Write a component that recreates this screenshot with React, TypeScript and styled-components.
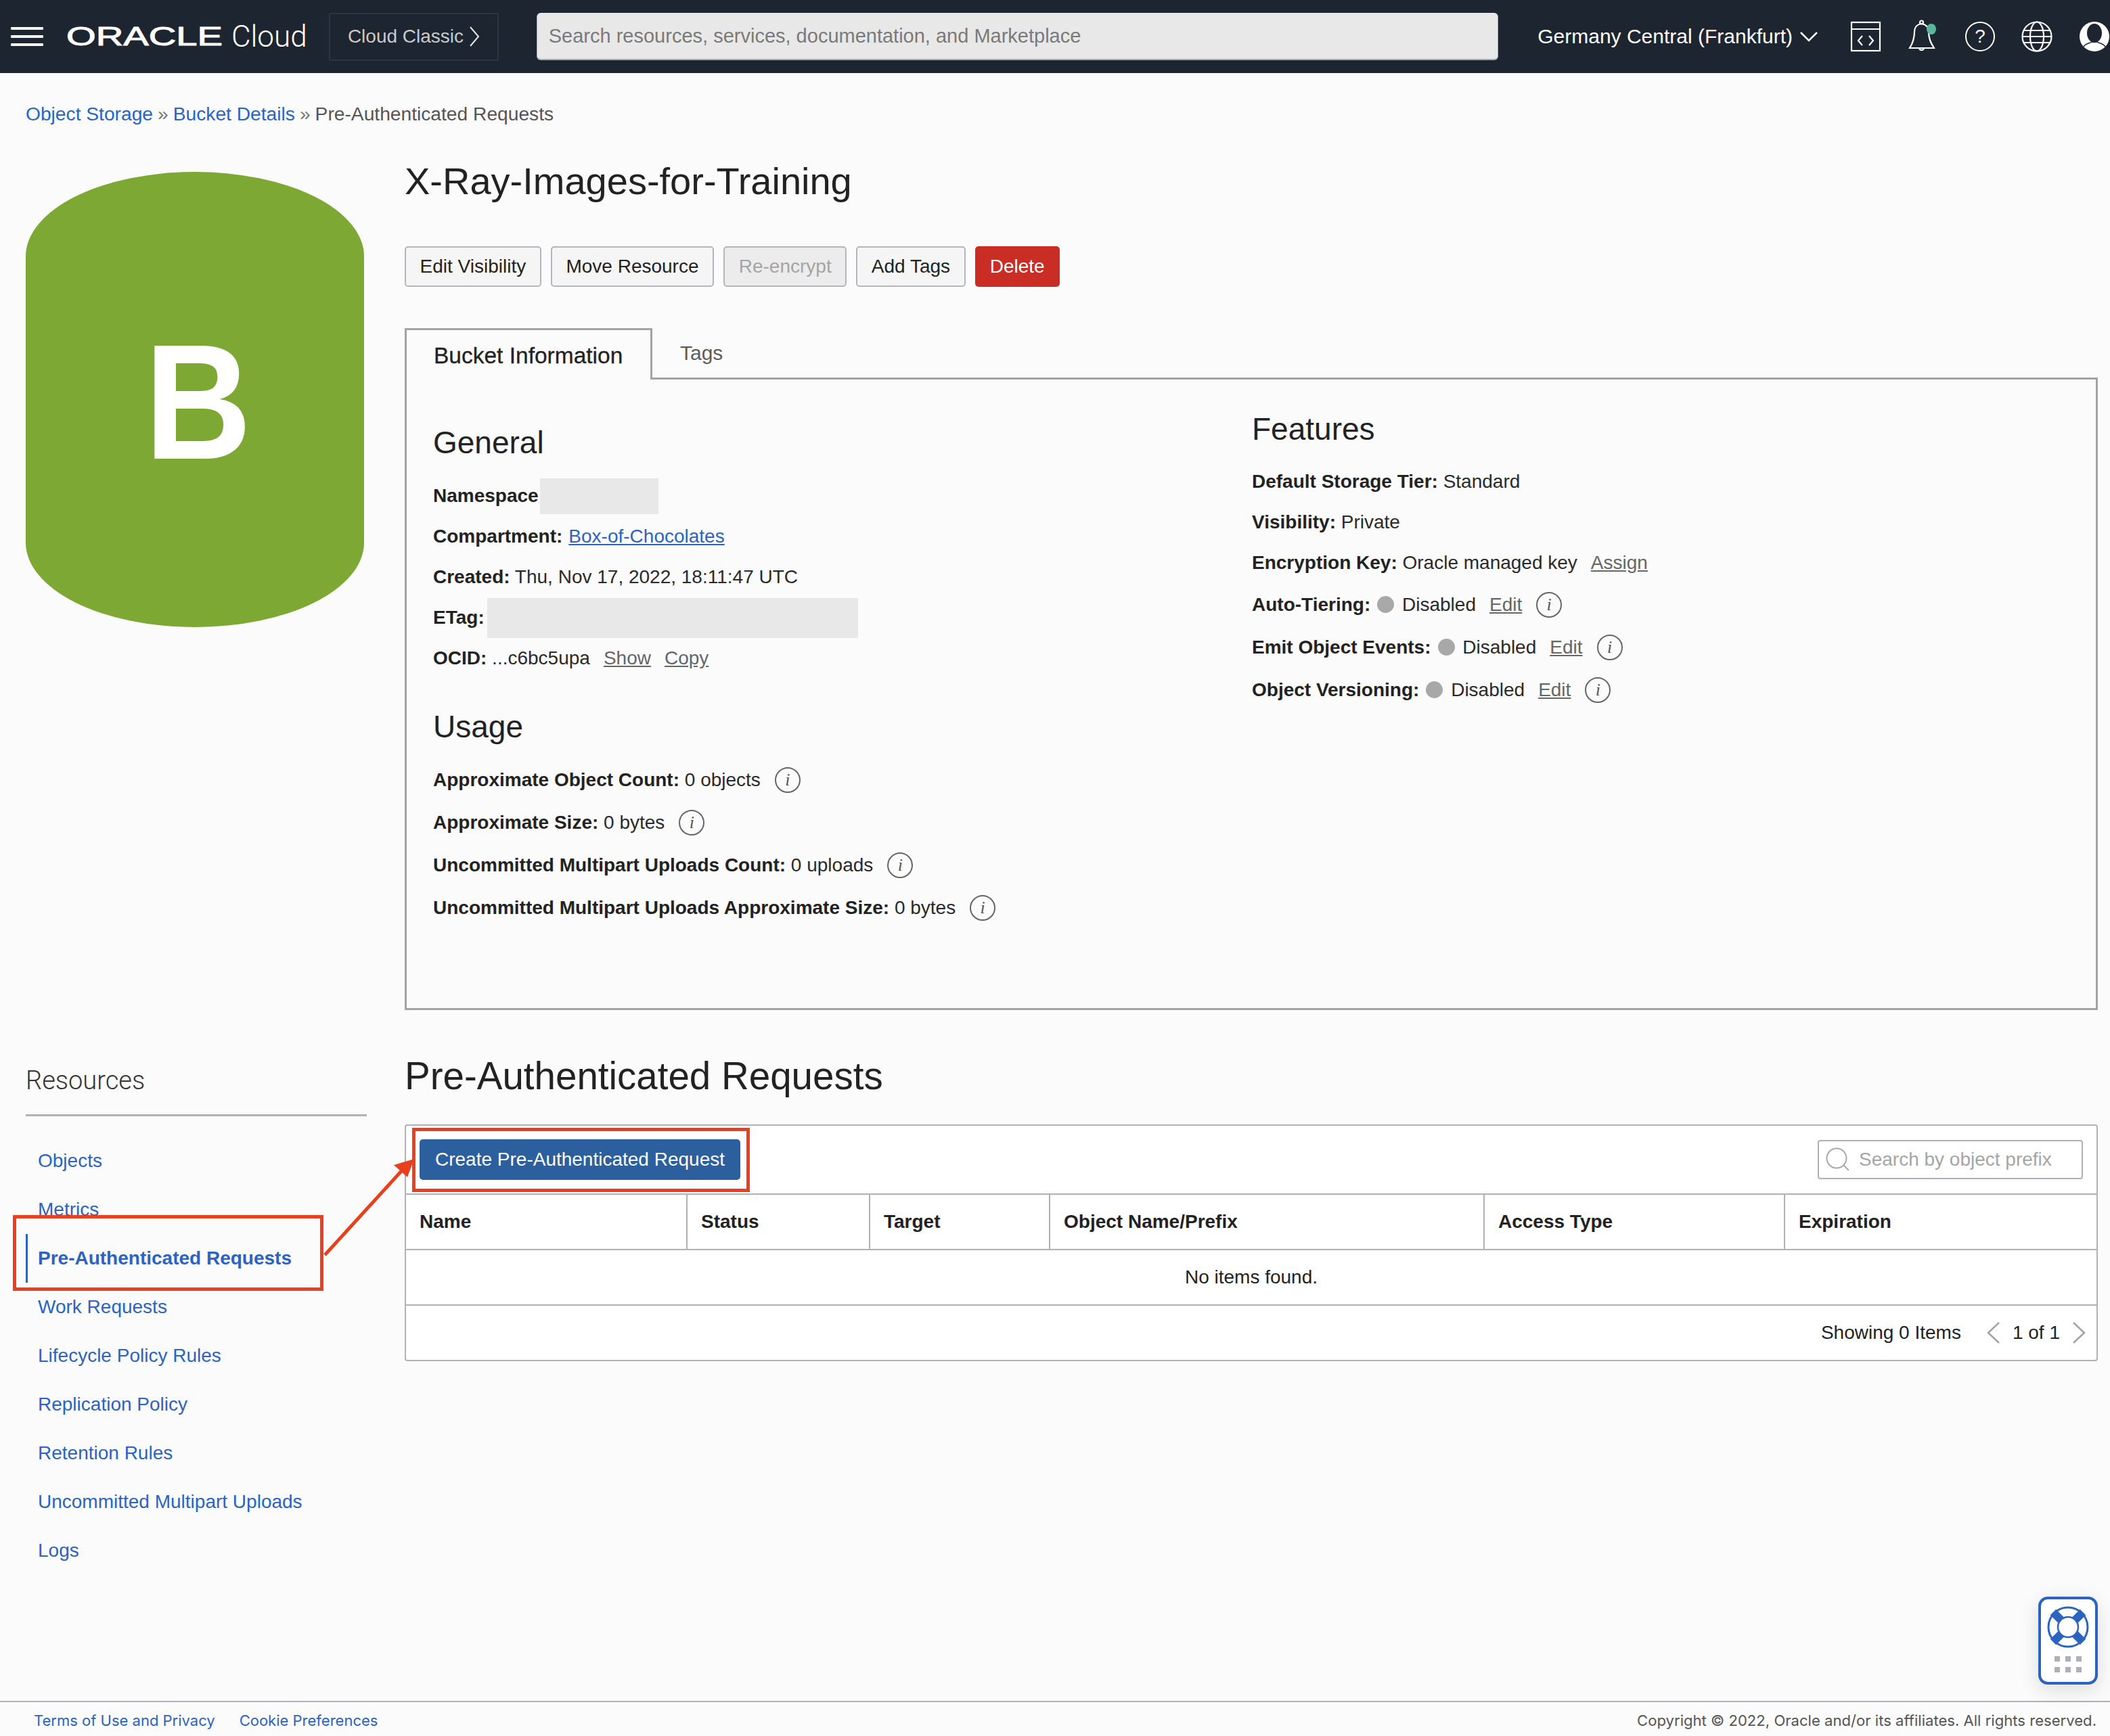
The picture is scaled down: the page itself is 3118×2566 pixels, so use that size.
import styled, { createGlobalStyle } from 'styled-components';

const GlobalStyle = createGlobalStyle`
  html, body { margin: 0; padding: 0; background: #fbfbfb; }
  body { font-family: "Liberation Sans", Arial, sans-serif; font-size: 28px; color: #222; }
  * { box-sizing: border-box; }
`;

const resources = ['Objects', 'Metrics', 'Pre-Authenticated Requests', 'Work Requests', 'Lifecycle Policy Rules', 'Replication Policy', 'Retention Rules', 'Uncommitted Multipart Uploads', 'Logs'];
const columns = ['Name', 'Status', 'Target', 'Object Name/Prefix', 'Access Type', 'Expiration'];

function Chevron({ dir, color, w = 20, h = 34, sw = 2.5 }: { dir: 'left' | 'right' | 'down'; color: string; w?: number; h?: number; sw?: number }) {
  const pts = dir === 'left' ? `${w - 2},2 2,${h / 2} ${w - 2},${h - 2}` : dir === 'right' ? `2,2 ${w - 2},${h / 2} 2,${h - 2}` : `2,2 ${w / 2},${h - 2} ${w - 2},2`;
  return (
    <svg width={w} height={h} viewBox={`0 0 ${w} ${h}`} fill="none" stroke={color} strokeWidth={sw}>
      <polyline points={pts} />
    </svg>
  );
}

function Info() {
  return <InfoIcon>i</InfoIcon>;
}

function App() {
  return (
    <Page>
      <GlobalStyle />
      <Header>
        <Hamburger><span /><span /><span /></Hamburger>
        <Logo><LogoMark>ORACLE</LogoMark><LogoCloud>Cloud</LogoCloud></Logo>
        <ClassicButton>Cloud Classic <Chevron dir="right" color="#e6e6e6" w={16} h={32} sw={2} /></ClassicButton>
        <SearchBar>Search resources, services, documentation, and Marketplace</SearchBar>
        <Region>Germany Central (Frankfurt) <Chevron dir="down" color="#fff" w={28} h={16} sw={2.5} /></Region>
        <HeaderIcons>
          <svg width="46" height="46" viewBox="0 0 46 46" fill="none" stroke="#fff" strokeWidth="2.2">
            <rect x="2" y="2" width="42" height="42" />
            <line x1="2" y1="12" x2="44" y2="12" />
            <polyline points="18,22 12,29 18,36" />
            <polyline points="28,22 34,29 28,36" />
          </svg>
          <svg width="46" height="50" viewBox="0 0 46 50" fill="none" stroke="#fff" strokeWidth="2.2">
            <path d="M3 42 C8 34 10 28 10 18 C10 10 15 7 20 6 C26 7 31 10 31 18 C31 28 34 34 39 42 Z" />
            <path d="M17 43 a4 4 0 0 0 7 0" />
            <circle cx="20.5" cy="4" r="2.5" />
            <ellipse cx="35" cy="14" rx="7" ry="8" fill="#5bb59b" stroke="none" />
          </svg>
          <HelpCircle>?</HelpCircle>
          <svg width="46" height="46" viewBox="0 0 46 46" fill="none" stroke="#fff" strokeWidth="2.2">
            <circle cx="23" cy="23" r="21.5" />
            <ellipse cx="23" cy="23" rx="10" ry="21.5" />
            <line x1="4" y1="14" x2="42" y2="14" />
            <line x1="2" y1="23" x2="44" y2="23" />
            <line x1="4" y1="32" x2="42" y2="32" />
          </svg>
          <svg width="46" height="46" viewBox="0 0 46 46">
            <circle cx="23" cy="23" r="22" fill="#fff" />
            <ellipse cx="23" cy="18" rx="11" ry="14" fill="#1d2531" />
            <path d="M7 38 C11 32 17 33 19 31 L27 31 C29 33 35 32 39 38" fill="none" stroke="#1d2531" strokeWidth="1.5" />
          </svg>
        </HeaderIcons>
      </Header>

      <Content>
        <Breadcrumb>
          <Link>Object Storage</Link><Sep>»</Sep><Link>Bucket Details</Link><Sep>»</Sep><span>Pre-Authenticated Requests</span>
        </Breadcrumb>

        <TopGrid>
          <Drum><DrumLetter>B</DrumLetter></Drum>
          <div>
            <Title>X-Ray-Images-for-Training</Title>
            <Actions>
              <ActionButton>Edit Visibility</ActionButton>
              <ActionButton>Move Resource</ActionButton>
              <ActionButton $disabled>Re-encrypt</ActionButton>
              <ActionButton>Add Tags</ActionButton>
              <DangerButton>Delete</DangerButton>
            </Actions>
            <Tabs>
              <ActiveTab>Bucket Information</ActiveTab>
              <Tab>Tags</Tab>
            </Tabs>
            <Panel>
              <div>
                <GeneralHeading>General</GeneralHeading>
                <Row><b>Namespace</b><Redacted $w={175} $h={53} /></Row>
                <Row><b>Compartment:</b><UnderlinedLink>Box-of-Chocolates</UnderlinedLink></Row>
                <Row><b>Created:</b> Thu, Nov 17, 2022, 18:11:47 UTC</Row>
                <Row><b>ETag:</b><Redacted $w={548} $h={59} $gap={4} /></Row>
                <Row><b>OCID:</b> ...c6bc5upa<Action>Show</Action><Action>Copy</Action></Row>
                <UsageHeading>Usage</UsageHeading>
                <Row $tall><b>Approximate Object Count:</b> 0 objects<Info /></Row>
                <Row $tall><b>Approximate Size:</b> 0 bytes<Info /></Row>
                <Row $tall><b>Uncommitted Multipart Uploads Count:</b> 0 uploads<Info /></Row>
                <Row $tall><b>Uncommitted Multipart Uploads Approximate Size:</b> 0 bytes<Info /></Row>
              </div>
              <div>
                <FeaturesHeading>Features</FeaturesHeading>
                <Row><b>Default Storage Tier:</b> Standard</Row>
                <Row><b>Visibility:</b> Private</Row>
                <Row><b>Encryption Key:</b> Oracle managed key<Action>Assign</Action></Row>
                <Row $tall><b>Auto-Tiering:</b><Dot /> Disabled<Action>Edit</Action><Info /></Row>
                <Row $tall><b>Emit Object Events:</b><Dot /> Disabled<Action>Edit</Action><Info /></Row>
                <Row $tall><b>Object Versioning:</b><Dot /> Disabled<Action>Edit</Action><Info /></Row>
              </div>
            </Panel>
          </div>
        </TopGrid>

        <LowerGrid>
          <aside>
            <ResourcesTitle>Resources</ResourcesTitle>
            <ResourceList>
              {resources.map((r) =>
                r === 'Pre-Authenticated Requests' ? (
                  <ActiveResource key={r}><span>{r}</span></ActiveResource>
                ) : (
                  <ResourceItem key={r}>{r}</ResourceItem>
                )
              )}
            </ResourceList>
          </aside>
          <div>
            <SectionTitle>Pre-Authenticated Requests</SectionTitle>
            <Table>
              <Toolbar>
                <Highlighted><PrimaryButton>Create Pre-Authenticated Request</PrimaryButton></Highlighted>
                <PrefixSearch>
                  <svg width="36" height="36" viewBox="0 0 36 36" fill="none" stroke="#a8a8a8" strokeWidth="2">
                    <circle cx="16" cy="16" r="14.5" />
                    <line x1="26" y1="26" x2="34" y2="34" />
                  </svg>
                  Search by object prefix
                </PrefixSearch>
              </Toolbar>
              <HeadRow>
                {columns.map((c) => <HeadCell key={c}>{c}</HeadCell>)}
              </HeadRow>
              <EmptyRow>No items found.</EmptyRow>
              <Pager>
                <span>Showing 0 Items</span>
                <PagerNav>
                  <Chevron dir="left" color="#a3a3a3" />
                  <span>1 of 1</span>
                  <Chevron dir="right" color="#a3a3a3" />
                </PagerNav>
              </Pager>
            </Table>
          </div>
          <Arrow width="180" height="170" viewBox="0 0 180 170">
            <line x1="40" y1="155" x2="154" y2="30" stroke="#e8401c" strokeWidth="5" />
            <polygon points="172,13 142,22 162,40" fill="#e8401c" />
          </Arrow>
        </LowerGrid>
      </Content>

      <Footer>
        <FooterLinks>
          <FooterLink>Terms of Use and Privacy</FooterLink>
          <FooterLink>Cookie Preferences</FooterLink>
        </FooterLinks>
        <Copyright>Copyright © 2022, Oracle and/or its affiliates. All rights reserved.</Copyright>
      </Footer>

      <HelpWidget>
        <svg width="62" height="62" viewBox="0 0 62 62">
          <circle cx="31" cy="31" r="29" fill="#fff" stroke="#2b63c1" strokeWidth="3" />
          <path d="M9 9 L21 21 M53 9 L41 21 M53 53 L41 41 M9 53 L21 41" stroke="#2b63c1" strokeWidth="12" />
          <circle cx="31" cy="31" r="15" fill="#fff" stroke="#2b63c1" strokeWidth="2.5" />
        </svg>
        <WidgetDots>{Array.from({ length: 6 }).map((_, i) => <i key={i} />)}</WidgetDots>
      </HelpWidget>
    </Page>
  );
}

export default App;

const Page = styled.div`
  min-height: 2566px;
  display: flex;
  flex-direction: column;
  position: relative;
`;

const Header = styled.header`
  height: 108px;
  background: #1d2531;
  display: flex;
  align-items: center;
  padding-left: 16px;
  color: #fff;
  overflow: hidden;
`;
const Hamburger = styled.div`
  width: 48px;
  display: flex;
  flex-direction: column;
  gap: 8px;
  span { display: block; height: 4px; background: #fff; border-radius: 1px; }
`;
const Logo = styled.div`
  display: flex;
  align-items: center;
  margin-left: 34px;
  width: 389px;
`;
const LogoMark = styled.span`
  font-size: 39px;
  font-weight: 400;
  -webkit-text-stroke: 1px #fff;
  display: inline-block;
  width: 229px;
  transform: scaleX(1.44);
  transform-origin: left center;
`;
const LogoCloud = styled.span`
  font-family: Roboto, sans-serif;
  font-weight: 300;
  font-size: 44px;
  margin-left: 15px;
`;
const ClassicButton = styled.div`
  width: 251px;
  height: 71px;
  border: 2px solid #2e3542;
  border-radius: 3px;
  display: flex;
  align-items: center;
  justify-content: center;
  gap: 8px;
  color: #c9c9c9;
  font-size: 28px;
`;
const SearchBar = styled.div`
  width: 1424px;
  height: 70px;
  margin-left: 56px;
  background: #e8e8e8;
  border: 2px solid #a9acb1;
  border-top: 0;
  border-left-width: 1px;
  border-right-width: 1px;
  border-radius: 6px;
  display: flex;
  align-items: center;
  padding-left: 17px;
  color: #7a7a7a;
  font-size: 29px;
`;
const Region = styled.div`
  margin-left: 58px;
  display: flex;
  align-items: center;
  gap: 10px;
  font-size: 30px;
  white-space: nowrap;
`;
const HeaderIcons = styled.div`
  margin-left: 47px;
  display: flex;
  align-items: center;
  gap: 39px;
  flex: none;
`;
const HelpCircle = styled.div`
  width: 44px;
  height: 44px;
  border: 2px solid #fff;
  border-radius: 50%;
  font-size: 28px;
  display: flex;
  align-items: center;
  justify-content: center;
`;

const Content = styled.main`
  flex: 1;
  padding: 0 18px 0 38px;
`;
const Breadcrumb = styled.nav`
  height: 40px;
  margin-top: 40px;
  line-height: 40px;
  font-size: 28.2px;
  color: #555;
  display: flex;
`;
const Link = styled.a`
  color: #2b63c1;
`;
const Sep = styled.span`
  margin: 0 7px;
  color: #777;
`;

const TopGrid = styled.section`
  display: grid;
  grid-template-columns: 560px 1fr;
  margin-top: 48px;
`;
const Drum = styled.div`
  width: 500px;
  height: 673px;
  margin-top: 18px;
  background: #7ca833;
  border-radius: 250px / 125px;
  color: #fff;
  font-weight: 700;
  font-size: 243px;
  display: flex;
  align-items: center;
  justify-content: center;
  padding: 6px 0 0 10px;
`;
const DrumLetter = styled.span`
  display: block;
  transform: scaleX(0.9);
`;
const Title = styled.h1`
  margin: 0;
  font-size: 56px;
  font-weight: 400;
  line-height: 64px;
  color: #222;
`;
const Actions = styled.div`
  display: flex;
  gap: 14px;
  margin-top: 64px;
`;
const ActionButton = styled.button<{ $disabled?: boolean }>`
  height: 60px;
  padding: 0 20.6px;
  font: inherit;
  background: ${(p) => (p.$disabled ? '#ececec' : '#f5f5f5')};
  color: ${(p) => (p.$disabled ? '#a5a5a5' : '#222')};
  border: 2px solid #b3b6bb;
  border-radius: 5px;
`;
const DangerButton = styled.button`
  height: 60px;
  padding: 0 22px;
  font: inherit;
  background: #c92d24;
  color: #fff;
  border: 0;
  border-radius: 5px;
`;
const Tabs = styled.div`
  display: flex;
  align-items: stretch;
  height: 76px;
  margin-top: 61px;
`;
const ActiveTab = styled.div`
  width: 366px;
  padding: 19px 0 0 40px;
  font-size: 33.5px;
  line-height: 38px;
  border: 3px solid #a3a3a3;
  border-bottom: 0;
  -webkit-text-stroke: 0.3px #222;
`;
const Tab = styled.div`
  flex: 1;
  padding: 19px 0 0 41px;
  font-size: 30px;
  line-height: 36px;
  color: #5c5c5c;
  border-bottom: 3px solid #a3a3a3;
`;
const Panel = styled.div`
  height: 932px;
  border: 3px solid #a3a3a3;
  border-top: 0;
  display: grid;
  grid-template-columns: 1210px 1fr;
  padding-left: 39px;
`;
const GeneralHeading = styled.h2`
  margin: 62px 0 18px;
  font-size: 46px;
  font-weight: 400;
  line-height: 62px;
`;
const UsageHeading = styled(GeneralHeading)`
  margin: 40px 0 16px;
`;
const FeaturesHeading = styled(GeneralHeading)`
  margin: 42px 0 17px;
`;
const Row = styled.div<{ $tall?: boolean }>`
  height: ${(p) => (p.$tall ? 63 : 60)}px;
  display: flex;
  align-items: center;
  white-space: pre;
  color: #2a2a2a;
  b { color: #222; }
`;
const Redacted = styled.span<{ $w: number; $h: number; $gap?: number }>`
  display: block;
  width: ${(p) => p.$w}px;
  height: ${(p) => p.$h}px;
  margin-left: ${(p) => p.$gap ?? 2}px;
  background: #e8e8e8;
`;
const UnderlinedLink = styled.a`
  margin-left: 9px;
  color: #2b63c1;
  text-decoration: underline;
`;
const Action = styled.a`
  margin-left: 20px;
  color: #666;
  text-decoration: underline;
`;
const InfoIcon = styled.span`
  width: 38px;
  height: 38px;
  margin-left: 21px;
  flex: none;
  border: 2px solid #666;
  border-radius: 50%;
  display: flex;
  align-items: center;
  justify-content: center;
  font-family: "Liberation Serif", serif;
  font-style: italic;
  font-size: 26px;
  color: #555;
`;
const Dot = styled.span`
  width: 25px;
  height: 25px;
  margin: 0 4px 0 10px;
  flex: none;
  background: #a8a8a8;
  border-radius: 50%;
`;

const LowerGrid = styled.section`
  display: grid;
  grid-template-columns: 560px 1fr;
  margin-top: 66px;
  position: relative;
`;
const ResourcesTitle = styled.h3`
  margin: 18px 0 0;
  width: 504px;
  height: 73px;
  font-family: Roboto, sans-serif;
  font-weight: 300;
  font-size: 38px;
  line-height: 40px;
  color: #333;
  border-bottom: 3px solid #aeb1b7;
`;
const ResourceList = styled.ul`
  list-style: none;
  margin: 30px 0 0;
  padding: 0;
`;
const ResourceItem = styled.li`
  height: 72px;
  line-height: 72px;
  padding-left: 18px;
  color: #2b63c1;
`;
const ActiveResource = styled(ResourceItem)`
  position: relative;
  font-weight: 700;
  span { display: block; position: relative; }
  span::before {
    content: '';
    position: absolute;
    left: -18px;
    top: 0;
    width: 3px;
    height: 72px;
    background: #2b63c1;
  }
  &::before {
    content: '';
    box-sizing: border-box;
    position: absolute;
    left: -19px;
    top: -28px;
    width: 459px;
    height: 112px;
    border: 5px solid #e9401f;
    background: #fbfbfb;
  }
`;
const Arrow = styled.svg`
  position: absolute;
  left: 402px;
  top: 141px;
`;
const SectionTitle = styled.h2`
  margin: 0;
  font-size: 56.5px;
  font-weight: 400;
  line-height: 64px;
`;
const Table = styled.div`
  margin-top: 39px;
  border: 2px solid #aeb1b7;
  border-radius: 4px;
  background: #fff;
`;
const Toolbar = styled.div`
  height: 102px;
  display: flex;
  align-items: center;
  justify-content: space-between;
  padding: 0 20px;
  border-bottom: 2px solid #aeb1b7;
`;
const Highlighted = styled.div`
  position: relative;
  &::after {
    content: '';
    position: absolute;
    top: -17px;
    left: -11px;
    right: -14px;
    bottom: -18px;
    border: 5px solid #e9401f;
    pointer-events: none;
  }
`;
const PrimaryButton = styled.button`
  display: block;
  width: 474px;
  height: 60px;
  border: 0;
  border-radius: 5px;
  background: #2c5f9e;
  color: #fff;
  font: inherit;
`;
const PrefixSearch = styled.div`
  width: 392px;
  height: 58px;
  border: 2px solid #aeb1b7;
  border-radius: 4px;
  display: flex;
  align-items: center;
  gap: 13px;
  padding-left: 10px;
  color: #a5a5a5;
`;
const HeadRow = styled.div`
  height: 82px;
  display: grid;
  grid-template-columns: 416px 270px 266px 642px 444px 1fr;
  border-bottom: 2px solid #aeb1b7;
`;
const HeadCell = styled.div`
  display: flex;
  align-items: center;
  padding-left: 20px;
  font-weight: 700;
  border-right: 2px solid #aeb1b7;
  &:last-child { border-right: 0; }
`;
const EmptyRow = styled.div`
  height: 82px;
  display: flex;
  align-items: center;
  justify-content: center;
  border-bottom: 2px solid #aeb1b7;
`;
const Pager = styled.div`
  height: 80px;
  display: flex;
  align-items: center;
  justify-content: flex-end;
  padding-right: 16px;
`;
const PagerNav = styled.div`
  display: flex;
  align-items: center;
  gap: 18px;
  margin-left: 38px;
`;

const Footer = styled.footer`
  height: 52px;
  border-top: 2px solid #aeb1b7;
  display: flex;
  align-items: center;
  justify-content: space-between;
  padding: 4px 20px 0 50px;
  font-family: Inter, sans-serif;
  font-size: 22px;
`;
const FooterLinks = styled.div`
  display: flex;
  gap: 36px;
`;
const FooterLink = styled.a`
  color: #2b63c1;
`;
const Copyright = styled.span`
  font-size: 22.1px;
  color: #555;
`;

const HelpWidget = styled.div`
  position: absolute;
  left: 3012px;
  top: 2360px;
  width: 88px;
  height: 130px;
  background: #fff;
  border: 4px solid #2b63c1;
  border-radius: 14px;
  box-shadow: 0 8px 30px rgba(0, 0, 0, 0.12);
  display: flex;
  flex-direction: column;
  align-items: center;
  padding-top: 10px;
`;
const WidgetDots = styled.div`
  display: grid;
  grid-template-columns: repeat(3, 8px);
  gap: 8px;
  margin-top: 12px;
  i { display: block; width: 8px; height: 8px; background: #aeb1b7; }
`;
